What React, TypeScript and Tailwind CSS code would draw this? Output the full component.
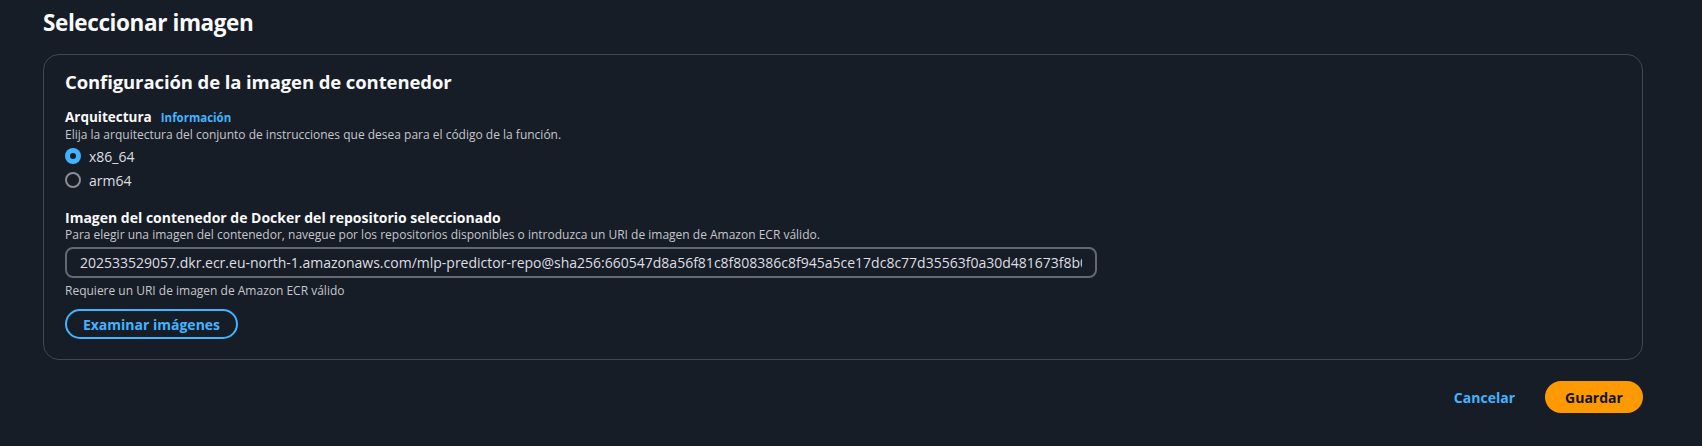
import { useState } from 'react'

const IMAGE_URI =
  '202533529057.dkr.ecr.eu-north-1.amazonaws.com/mlp-predictor-repo@sha256:660547d8a56f81c8f808386c8f945a5ce17dc8c77d35563f0a30d481673f8b0c1e2d'

function Radio({ checked, label, onSelect }: { checked: boolean; label: string; onSelect: () => void }) {
  return (
    <button type="button" onClick={onSelect} className="flex h-[20px] items-center gap-[8px] text-left">
      {checked ? (
        <span className="flex h-[16px] w-[16px] items-center justify-center rounded-full bg-[#42b4ff]">
          <span className="h-[6px] w-[6px] rounded-full bg-[#161d26]" />
        </span>
      ) : (
        <span className="h-[16px] w-[16px] rounded-full border-2 border-[#8c8c94]" />
      )}
      <span className="text-[14px] text-[#dedee3]">{label}</span>
    </button>
  )
}

export default function App() {
  const [arch, setArch] = useState('x86_64')
  const [uri, setUri] = useState(IMAGE_URI)

  return (
    <div
      className="min-h-[446px] bg-[#161d26] pl-[43px] pr-[59px] pt-[7px] text-[#dedee3]"
      style={{ fontFamily: '"Open Sans", "Noto Sans", Arial, sans-serif' }}
    >
      <h1 className="text-[22.5px] font-bold leading-[32px] tracking-[-0.4px] text-[#f9f9fa]">Seleccionar imagen</h1>

      <div className="mt-[15px] rounded-[16px] border border-[#424650] px-[21px] pb-[20px] pt-[15px]">
        <h2 className="text-[18.5px] font-bold leading-[24px] tracking-[-0.1px] text-[#f9f9fa]">
          Configuración de la imagen de contenedor
        </h2>

        <div className="mt-[14px]">
          <div className="flex items-baseline gap-[9px] leading-[19px]">
            <span className="text-[13.5px] font-bold text-[#f9f9fa]">Arquitectura</span>
            <a href="#" className="text-[11.5px] font-bold text-[#42b4ff]">
              Información
            </a>
          </div>
          <p className="text-[12px] leading-[15px] text-[#c6c6cd]">
            Elija la arquitectura del conjunto de instrucciones que desea para el código de la función.
          </p>
          <div className="mt-[4px] flex flex-col items-start gap-[4px]">
            <Radio checked={arch === 'x86_64'} label="x86_64" onSelect={() => setArch('x86_64')} />
            <Radio checked={arch === 'arm64'} label="arm64" onSelect={() => setArch('arm64')} />
          </div>
        </div>

        <div className="mt-[18px]">
          <div className="text-[14px] font-bold leading-[19px] text-[#f9f9fa]">
            Imagen del contenedor de Docker del repositorio seleccionado
          </div>
          <p className="text-[12px] leading-[15px] text-[#c6c6cd]">
            Para elegir una imagen del contenedor, navegue por los repositorios disponibles o introduzca un URI de
            imagen de Amazon ECR válido.
          </p>
          <input
            value={uri}
            onChange={(e) => setUri(e.target.value)}
            className="mt-[5px] h-[31px] w-[1032px] rounded-[8px] border-2 border-[#656871] bg-transparent px-[13px] text-[14px] text-[#dedee3] outline-none"
          />
          <p className="mt-[5px] text-[12px] leading-[16px] text-[#c6c6cd]">Requiere un URI de imagen de Amazon ECR válido</p>
          <button
            type="button"
            className="mt-[10px] h-[30px] w-[173px] rounded-full border-2 border-[#42b4ff] text-[14px] font-bold text-[#42b4ff]"
          >
            Examinar imágenes
          </button>
        </div>
      </div>

      <div className="mt-[21px] flex items-center justify-end gap-[30px]">
        <button type="button" className="text-[14px] font-bold text-[#42b4ff]">
          Cancelar
        </button>
        <button
          type="button"
          className="h-[32px] w-[98px] rounded-full bg-[#ff9900] text-[14px] font-bold text-[#0f141a]"
        >
          Guardar
        </button>
      </div>
    </div>
  )
}
